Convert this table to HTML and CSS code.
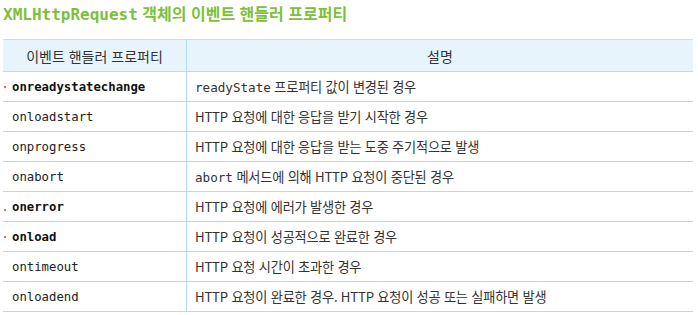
FILE: index.html
```html
<!DOCTYPE html>
<html lang="ko">
<head>
<meta charset="utf-8">
<link rel="stylesheet" href="styles.css">
</head>
<body>
<h1 class="title"><span class="mono">XMLHttpRequest</span> 객체의 이벤트 핸들러 프로퍼티</h1>
<table class="tbl">
  <thead>
    <tr><th class="c1">이벤트 핸들러 프로퍼티</th><th class="c2">설명</th></tr>
  </thead>
  <tbody>
    <tr><td class="code bold mark">onreadystatechange</td><td><span class="mono">readyState</span> 프로퍼티 값이 변경된 경우</td></tr>
    <tr><td class="code">onloadstart</td><td>HTTP 요청에 대한 응답을 받기 시작한 경우</td></tr>
    <tr><td class="code">onprogress</td><td>HTTP 요청에 대한 응답을 받는 도중 주기적으로 발생</td></tr>
    <tr><td class="code">onabort</td><td><span class="mono">abort</span> 메서드에 의해 HTTP 요청이 중단된 경우</td></tr>
    <tr><td class="code bold mark low">onerror</td><td>HTTP 요청에 에러가 발생한 경우</td></tr>
    <tr><td class="code bold mark">onload</td><td>HTTP 요청이 성공적으로 완료한 경우</td></tr>
    <tr><td class="code">ontimeout</td><td>HTTP 요청 시간이 초과한 경우</td></tr>
    <tr><td class="code">onloadend</td><td>HTTP 요청이 완료한 경우. HTTP 요청이 성공 또는 실패하면 발생</td></tr>
  </tbody>
</table>
</body>
</html>
```
FILE: styles.css
```css
html, body { margin: 0; padding: 0; background: #fff; }
body {
  padding: 0 5px 0 3px;
  font-family: "Noto Sans CJK KR", "Noto Sans", sans-serif;
  color: #333;
}
.title {
  margin: 0;
  padding-top: 1px;
  height: 38px;
  font-size: 16px;
  line-height: 24px;
  font-weight: 700;
  color: #7dc13a;
  letter-spacing: 0;
}
.mono { font-family: "DejaVu Sans Mono", monospace; font-size: 12.6px; letter-spacing: 0; }
.title .mono { font-weight: 700; font-size: 16px; }
.tbl {
  width: 690px;
  border-collapse: collapse;
  font-size: 13.2px;
}
.tbl th {
  background: #e8f4fc;
  font-weight: 400;
  height: 31px;
  padding: 0;
  color: #333;
  font-size: 14px;
  border-top: 1px solid #bfe3f5;
  border-bottom: 1px solid #b2dcf2;
}
.tbl th.c1 { width: 183px; border-right: 1px solid #b2dcf2; }
.tbl td {
  height: 29px;
  padding: 0 0 0 8px;
  border-bottom: 1px solid #b2dcf2;
  color: #333;
  white-space: nowrap;
  letter-spacing: -0.2px;
}
.tbl td:first-child { border-right: 1px solid #b2dcf2; padding-left: 9px; letter-spacing: 0; }
.tbl td.code {
  font-family: "DejaVu Sans Mono", monospace;
  font-size: 12.3px;
  color: #222;
  position: relative;
}
.tbl td.bold { font-weight: 700; color: #111; }
.mark::before {
  content: "";
  position: absolute;
  left: 1px;
  top: 14px;
  width: 2px;
  height: 2px;
  border-radius: 50%;
  background: #e33;
}
.mark.low::before { top: 17px; }
```
